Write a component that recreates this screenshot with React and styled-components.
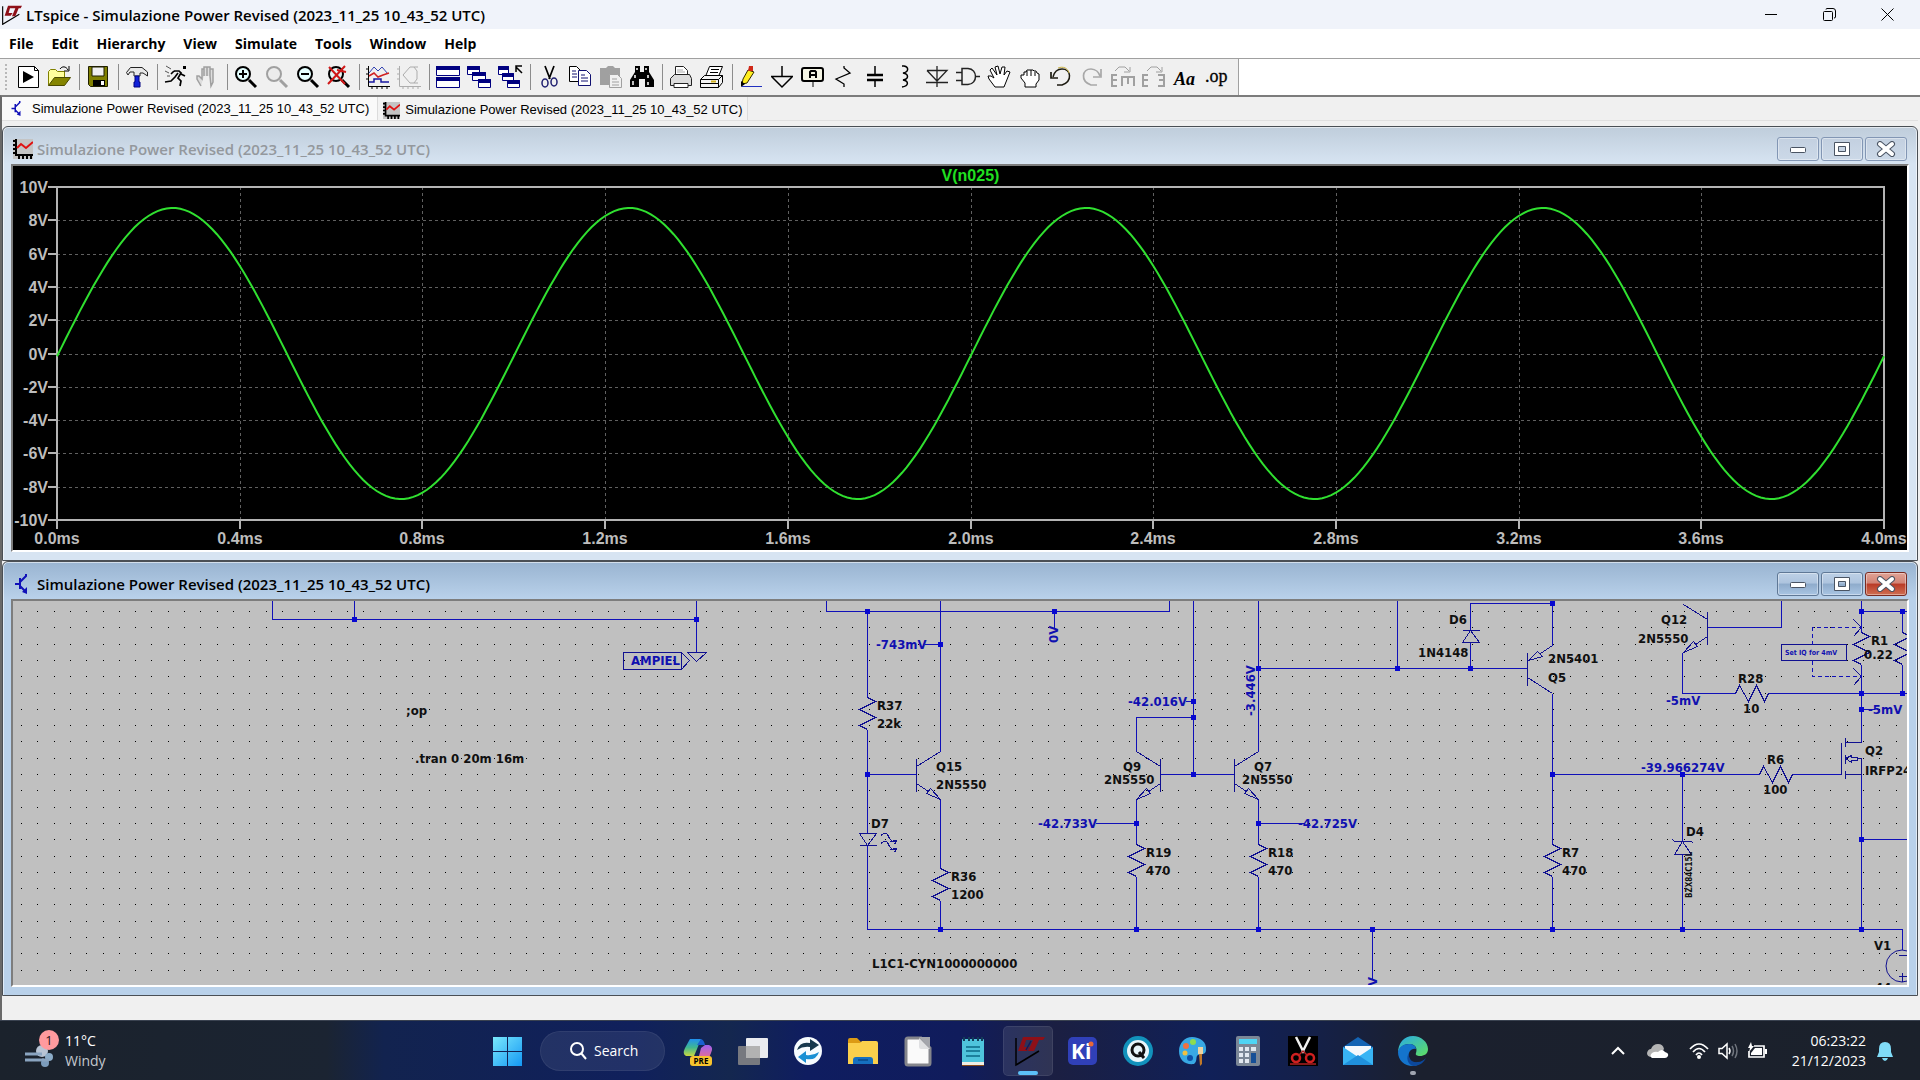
import React, { useLayoutEffect, useRef, useState } from "react";
import styled, { createGlobalStyle } from "styled-components";

const UI = '"Open Sans", "Noto Sans", sans-serif';
const TITLE = "Simulazione Power Revised (2023_11_25 10_43_52 UTC)";

const GlobalStyle = createGlobalStyle`
  * { box-sizing: border-box; }
  body { margin: 0; background: #f0f0f0; font-family: ${UI}; color: #000; }
  button { font: inherit; color: inherit; border: 0; padding: 0; margin: 0; background: none; }
  svg { display: block; }
`;

/* ---------- page shell ---------- */

const Page = styled.div`
  min-height: 100vh;
  display: flex;
  flex-direction: column;
`;

const TitleBar = styled.header`
  height: 29px;
  display: flex;
  align-items: center;
  gap: 4px;
  padding: 0 4px 0 2px;
  background: #f0f3fa;
`;

const AppTitle = styled.h1`
  margin: 0;
  flex: 1;
  font-size: 15px;
  font-weight: 600;
  line-height: 20px;
  white-space: nowrap;
`;

const SystemButtons = styled.div`
  display: flex;
`;

const SystemButton = styled.button`
  width: 58px;
  height: 29px;
  display: flex;
  align-items: center;
  justify-content: center;
`;

const MenuBar = styled.nav`
  height: 30px;
  display: flex;
  align-items: center;
  gap: 18px;
  padding: 0 9px;
  background: #fff;
  border-bottom: 1px solid #a0a0a0;
`;

const MenuItem = styled.button`
  font-size: 14px;
  font-weight: 700;
  line-height: 20px;
`;

const ToolStrip = styled.div`
  background: #fff;
  display: flex;
`;

const ToolBar = styled.div`
  height: 36px;
  display: flex;
  align-items: center;
  padding: 0 6px 0 5px;
  background: #f0f0f0;
  border-right: 1px solid #a0a0a0;
`;

const Grip = styled.span`
  width: 2px;
  height: 26px;
  margin-right: 6px;
  background: repeating-linear-gradient(#b8b8b8 0 2px, #f0f0f0 2px 4px);
`;

const ToolButton = styled.button`
  width: 31px;
  height: 30px;
  display: flex;
  align-items: center;
  padding-left: 3px;
`;

const Separator = styled.span`
  width: 8px;
  height: 26px;
  display: flex;
  justify-content: center;
  &::before { content: ""; width: 1px; background: #8c8c8c; }
`;

const Workspace = styled.main`
  flex: 1;
  border: solid #696969;
  border-width: 2px 0 0 2px;
  border-top-color: #7c7c7c;
  padding-right: 2px;
`;

const TabBar = styled.div`
  height: 24px;
  display: flex;
  align-items: stretch;
  border-bottom: 1px solid #e0e0e0;
`;

const Tab = styled.button`
  display: flex;
  align-items: center;
  gap: ${(p) => (p.$active ? 7 : 5)}px;
  padding: ${(p) => (p.$active ? "0 8px 0 8px" : "3px 4px 0 5px")};
  background: ${(p) => (p.$active ? "#fafafa" : "#f3f3f3")};
  border-right: 1px solid #dcdcdc;
  font-family: "Liberation Sans", Arial, sans-serif;
  font-size: 13px;
  line-height: 16px;
  white-space: nowrap;
`;

const Mdi = styled.div`
  padding-top: 5px;
  background: #f0f0f0;
`;

/* ---------- child windows ---------- */

const Frame = styled.section`
  border: 1px solid #4a4f55;
  border-radius: 6px 6px 0 0;
  padding: 0 8px 8px;
  background: ${(p) =>
    p.$active
      ? "linear-gradient(#99b4d1 0, #b9d1ea 37px, #b9d1ea 100%)"
      : "linear-gradient(#bfcddb 0, #d7e4f2 37px, #d7e4f2 100%)"};
  box-shadow: inset 0 1px 0 #ffffff90, inset -1px 0 0 #ffffff90, inset 1px 0 0 #ffffff90;
`;

const FrameBar = styled.div`
  height: 37px;
  display: flex;
  align-items: center;
  gap: 4px;
  padding: 7px 2px 0 2px;
`;

const FrameTitle = styled.h2`
  flex: 1;
  margin: 0;
  font-size: 15px;
  font-weight: 600;
  line-height: 20px;
  white-space: nowrap;
  color: ${(p) => (p.$active ? "#000" : "#94989d")};
`;

const FrameButtons = styled.div`
  display: flex;
  gap: 2px;
`;

const FrameButton = styled.button`
  width: 42px;
  height: 24px;
  display: flex;
  align-items: center;
  justify-content: center;
  border: 1px solid ${(p) => (p.$tone === "idle" ? "#8296b4" : p.$tone === "close" ? "#7a2a20" : "#5f7896")};
  border-radius: 3px;
  box-shadow: inset 0 0 0 1px #ffffff60;
  background: ${(p) =>
    p.$tone === "idle"
      ? "linear-gradient(#c3d0e0, #ccd9e8)"
      : p.$tone === "close"
        ? "linear-gradient(#e0a396 0, #d28375 46%, #b93a26 50%, #cf6f52 100%)"
        : "linear-gradient(#bdd0e6 0, #adc4de 46%, #8eabcb 50%, #a9c5e3 100%)"};
`;

const Pane = styled.div`
  height: 388px;
  border: 2px solid;
  border-color: #7d7d7d #fff #fff #7d7d7d;
  background: ${(p) => p.$fill};
  overflow: hidden;
`;

/* ---------- small drawings ---------- */

const Logo = ({ size = 22 }) => (
  <svg width={size} height={size} viewBox="0 0 30 30" aria-hidden="true">
    <path d="M1 2V29L26 14" fill="none" stroke="#000" strokeWidth="1.7" />
    <path d="M4 16L9 1H13L10 12H16L13 16ZM13 1H30L28 5H25L20 17H15L20 5H12Z" fill="#8e1018" />
  </svg>
);

const NpnIcon = ({ size = 20 }) => (
  <svg width={size} height={size} viewBox="0 0 20 20" aria-hidden="true">
    <path d="M2 10H7M7 4V15M7 8L13 2V0M7 12L12 17" stroke="#1010b8" strokeWidth="2" fill="none" />
    <path d="M14 20V13L9 18Z" fill="#1010b8" />
  </svg>
);

const WaveIcon = ({ size = 20 }) => (
  <svg width={size} height={size} viewBox="0 0 20 20" aria-hidden="true">
    <path d="M0 0H20V20H0Z" fill="#c4c4c4" />
    <path d="M3 0V16H20M0 2H3M0 6H3M0 10H3M0 14H3M6 16V20M10 16V20M14 16V20M18 16V20" stroke="#000" strokeWidth="2" fill="none" />
    <path d="M4 9L8 5L13 9L20 3" stroke="#e01010" strokeWidth="2" fill="none" />
  </svg>
);

const lens = (color, fill, inner) => (
  <>
    <path d="M15 15L22 22" stroke={color} strokeWidth="3" />
    <circle cx="9" cy="9" r="7" fill={fill} stroke={color} strokeWidth="2" />
    {inner}
  </>
);

const smallWindow = (x, y, w, h) => (
  <>
    <path d={`M${x} ${y}h${w}v${h}h${-w}Z`} fill="#fff" stroke="#000080" />
    <path d={`M${x} ${y}h${w}v3h${-w}Z`} fill="#000080" stroke="#000080" />
  </>
);

const letterE = (x, y) => `M${x + 6} ${y}H${x + 1}V${y + 11}H${x + 6}M${x + 1} ${y + 5}H${x + 6}`;

const ICONS = {
  run: <><path d="M2.5 1.5H18.5L22.5 5.5V22.5H2.5Z" fill="#fff" stroke="#000" /><path d="M18.5 1.5V5.5H22.5" fill="none" stroke="#000" /><path d="M7 6V18L18 12Z" /></>,
  open: <><path d="M1.5 20.5V6.5L3.5 4.5H8.5L10.5 6.5H17.5V12" fill="#ffff9c" stroke="#808000" /><path d="M1.5 20.5L7.5 12.5H23.5L17.5 20.5Z" fill="#848400" stroke="#4a4a00" /><path d="M13 4C15 1 19 1 21 5M22 1V6H17" stroke="#000" fill="none" /></>,
  save: <><path d="M2.5 1.5H21.5V21.5H4.5L2.5 19.5Z" fill="#808000" stroke="#202000" /><path d="M6 2H18V11H6Z" fill="#f0f0f0" stroke="#202000" /><path d="M7 15H19V21H7Z" /><path d="M15 16H18V20H15Z" fill="#fff" /></>,
  hammer: <><path d="M1.5 7.5L5.5 2.5H17L22.5 7V11L18 8H15V11H9V7H5L3 10Z" fill="#e8e8e8" stroke="#222" /><path d="M10 11H14V17H15V22H9V17H10Z" fill="#1020d8" stroke="#000080" /></>,
  sprint: <><path d="M19 1H22V4H19Z" /><path d="M10 6H15L17 8L14 13L17 16L16 21M14 8L11 12L7 16L1 17M17 9L21 11M10 6L7 9" stroke="#000" strokeWidth="1.7" fill="none" /><path d="M2 1L7 4M1 6L5 8M3 11L6 11" stroke="#555" /></>,
  halt: <path d="M6 21L2 14V11H4L7 14V4H9V11M9 11V2H12V11M12 11V2H15V11M15 11V4H18V12V17L16 21Z" fill="#dedede" stroke="#a0a0a0" strokeWidth="1.5" />,
  zoomIn: lens("#000", "#e4ffff", <path d="M9 5V13M5 9H13" stroke="#000" strokeWidth="2" />),
  zoomPan: lens("#a0a0a0", "#ececec", null),
  zoomOut: lens("#000", "#e4ffff", <path d="M5 9H13" stroke="#000" strokeWidth="2" />),
  zoomFit: lens("#000", "#e4f4f4", <path d="M2 2L18 19M18 1L1 19M10 5L19 7" stroke="#d01818" strokeWidth="2" />),
  plot: <><path d="M2.5 1V21.5H24M0 4H3M0 9H3M0 14H3M6 21V24M11 21V24M16 21V24M21 21V24" stroke="#000" fill="none" /><path d="M3 8L8 2L12 6L16 2L22 9" stroke="#3040b0" fill="none" /><path d="M3 11L8 8L12 12L17 10L23 8" stroke="#d02020" strokeWidth="1.5" fill="none" /><path d="M3 17H8V14H15V17H23" stroke="#1818a0" strokeWidth="1.5" fill="none" /></>,
  plotOff: <path d="M2.5 1V21.5H24M0 4H3M0 9H3M0 14H3M6 21V24M11 21V24M16 21V24M21 21V24M21 2H13L6 10L13 18H21M17 2L20 6V14L17 18" stroke="#acacac" fill="none" />,
  tile: <><path d="M.5 1.5H23.5V10.5H.5ZM.5 13.5H23.5V22.5H.5Z" fill="#fff" stroke="#000080" /><path d="M0 1H24V5H0ZM0 12H24V16H0Z" fill="#000080" /></>,
  cascade: <>{smallWindow(0.5, 1.5, 12, 8)}{smallWindow(5.5, 7.5, 13, 8)}{smallWindow(11.5, 14.5, 12, 8)}</>,
  closeAll: <>{smallWindow(0.5, 1.5, 10, 8)}{smallWindow(4.5, 8.5, 11, 7)}{smallWindow(9.5, 15.5, 12, 7)}<path d="M24 8L18 2M18 7V1H24" stroke="#000" fill="none" strokeWidth="1.5" /></>,
  cut: <><path d="M8 1L13 14M17 1L12 14" stroke="#000" strokeWidth="1.7" /><ellipse cx="8" cy="18" rx="3" ry="4" fill="none" stroke="#202070" strokeWidth="1.5" /><ellipse cx="17" cy="17" rx="3" ry="4" fill="none" stroke="#202070" strokeWidth="1.5" /></>,
  copy: <><path d="M1.5 1.5H8.5L12.5 5.5V16.5H1.5Z" fill="#fff" stroke="#000" /><path d="M10.5 5.5H18.5L22.5 9.5V20.5H10.5Z" fill="#fff" stroke="#101070" /><path d="M4 6H8M4 9H9M4 12H9M13 10H17M13 13H20M13 16H20" stroke="#101070" /></>,
  paste: <><path d="M1 3H7L9 1H14L16 3H21V20H1Z" fill="#a0a0a0" /><path d="M10.5 9.5H18.5L22.5 13.5V22.5H10.5Z" fill="#f0f0f0" stroke="#a0a0a0" /><path d="M13 14H18M13 17H20M13 20H20" stroke="#a0a0a0" /></>,
  find: <><path d="M5 1H10V7H14V1H19V7L24 15V22H15V14H9V22H0V15L5 7Z" /><path d="M7 3V5M16 3V5M5 10V13M18 10V13M3 16V20M18 17V20" stroke="#fff" strokeWidth="1.5" /></>,
  preview: <><path d="M6.5 9.5V1.5H14.5L18.5 5.5V9.5" fill="#fff" stroke="#222" /><path d="M1.5 13.5L5.5 9.5H20.5L22.5 13.5V20.5H1.5Z" fill="#dcdcdc" stroke="#222" /><path d="M5 18.5H19V22.5H5Z" fill="#fff" stroke="#222" /><path d="M8 5H14M8 7H16" stroke="#aaa" /></>,
  print: <><path d="M5.5 11.5L9.5 1.5H22.5L18.5 11.5" fill="#fff" stroke="#000" /><path d="M.5 14.5L4.5 10.5H22.5V17.5L18.5 22.5H.5ZM.5 14.5H18.5V22.5M18.5 14.5L22.5 10.5M1 18.5H18" fill="#f4f4f4" stroke="#000" /><path d="M11 4.5H19M10 7.5H18" stroke="#000" /><path d="M11 16.5H16" stroke="#d0b020" strokeWidth="2" /></>,
  wire: <><path d="M9 5L15 7L8 18L3 19L4 14Z" fill="#ffee20" stroke="#302800" /><path d="M10 1H14V6H9Z" fill="#d02818" /><path d="M2 16L6 19L2 22Z" /><path d="M3 21.5H23" stroke="#2030c0" /></>,
  ground: <path d="M12 1V11M1 11.5H23M2 12L12 22L22 12" stroke="#000" strokeWidth="1.5" fill="none" />,
  label: <><rect x="1" y="3" width="21" height="13" rx="2" fill="#f4f4e4" stroke="#000" strokeWidth="2" /><path d="M12 17V22" stroke="#555" strokeWidth="1.5" /><path d="M9 13V7L10 6H14L15 7V13M9 10H15" stroke="#000" strokeWidth="2" fill="none" /></>,
  resistor: <path d="M12 1V3L18 8L4 14L12 19V22" stroke="#000" strokeWidth="1.3" fill="none" />,
  capacitor: <><path d="M12 1V9M12 15V22" stroke="#000" strokeWidth="1.5" /><path d="M4 10H20M4 15H20" stroke="#000" strokeWidth="2.5" /></>,
  inductor: <path d="M8 1H10C15 2 15 7 9 8C15 9 15 14 9 15C15 16 15 21 8 22" stroke="#000" strokeWidth="1.5" fill="none" />,
  diode: <path d="M12 1V22M2 5.5H22L12 16L2 5.5M1 17.5H23" stroke="#222" strokeWidth="1.3" fill="none" />,
  gate: <path d="M6 3.5H12C22 4 22 19 12 19.5H6ZM0 7.5H6M0 15.5H6M19 11.5H24" stroke="#222" strokeWidth="1.5" fill="none" />,
  move: <path d="M8 22L2 14L1 11H4L7 13L3 5L5 3L10 10L8 2L11 1L13 9L15 2H18L17 10L20 6L23 7L19 17L17 22Z" fill="#fff" stroke="#000" />,
  drag: <path d="M7 22V18L3 13V10H6V7H8L9 5H12L13 5H15L16 6H18L19 8L21 9V15L18 19V22Z M9 6V11M13 5V11M17 7V11" fill="#fff" stroke="#000" />,
  undo: <><path d="M8 20H13C24 16 22 4 13 4C8 4 5 8 4 12" stroke="#1c1a10" strokeWidth="1.5" fill="none" /><path d="M9 3C14 1 19 3 20 8" stroke="#c8b040" fill="none" /><path d="M2 7V13H9" stroke="#1c1a10" strokeWidth="1.7" fill="none" /></>,
  redo: <path d="M17 20H11C0 16 2 4 11 4C16 4 19 8 20 11M21 4V12H13" stroke="#a8a8a8" strokeWidth="1.7" fill="none" />,
  rotate: <><path d={`${letterE(0, 10)}M11 21V12H23V21M17 12V19M11 12V19`} stroke="#a0a0a0" strokeWidth="2" fill="none" /><path d="M4 6L8 2H14L18 6M19 2V7H13" stroke="#a0a0a0" fill="none" /></>,
  mirror: <><path d={`${letterE(0, 10)}M16 10H22V21H16M17 15H22`} stroke="#a0a0a0" strokeWidth="2" fill="none" /><path d="M5 6L9 2H15L19 6M20 2V7H14" stroke="#a0a0a0" fill="none" /></>,
  text: <text x="1" y="20" fontFamily="Liberation Serif, serif" fontStyle="italic" fontWeight="700" fontSize="18">Aa</text>,
  directive: <text x="1" y="17" fontFamily="Liberation Serif, serif" stroke="#000" strokeWidth=".3" fontSize="18">.op</text>,
};

const TOOLS = [
  ["run", "open"], ["save"], ["hammer"], ["sprint", "halt"],
  ["zoomIn", "zoomPan", "zoomOut", "zoomFit"], ["plot", "plotOff"],
  ["tile", "cascade", "closeAll"], ["cut", "copy", "paste", "find"], ["preview", "print"],
  ["wire", "ground", "label", "resistor", "capacitor", "inductor", "diode", "gate", "move",
    "drag", "undo", "redo", "rotate", "mirror", "text", "directive"],
];

/* ---------- waveform ---------- */

function useWidth(initial) {
  const ref = useRef(null);
  const [width, setWidth] = useState(initial);
  useLayoutEffect(() => {
    const measure = () => setWidth(ref.current.clientWidth);
    measure();
    const observer = new ResizeObserver(measure);
    observer.observe(ref.current);
    return () => observer.disconnect();
  }, []);
  return [ref, width];
}

const PlotText = styled.text`
  font: 700 16px "Liberation Sans", Arial, sans-serif;
  fill: ${(p) => p.$color || "#bdbdbd"};
  text-anchor: ${(p) => p.$anchor || "middle"};
`;

function Waveform() {
  const [ref, width] = useWidth(1894);
  const left = 44;
  const right = width - 23;
  const top = 21;
  const bottom = 354;
  const xAt = (ms) => left + ((right - left) * ms) / 4;
  const yAt = (v) => top + ((bottom - top) * (10 - v)) / 20;
  const volts = Array.from({ length: 11 }, (_, i) => 10 - 2 * i);
  const times = Array.from({ length: 11 }, (_, i) => i * 0.4);
  const trace = Array.from({ length: 401 }, (_, i) => {
    const ms = i / 100;
    return `${xAt(ms).toFixed(1)},${yAt(8.74 * Math.sin(2 * Math.PI * (ms - 0.003))).toFixed(1)}`;
  }).join(" ");
  const rowY = (v) => Math.round(yAt(v));
  const colX = (t) => Math.round(xAt(t));
  return (
    <Pane $fill="#000">
      <div ref={ref}>
        <svg width="100%" height="384" role="img" aria-label="V(n025)">
          <g shapeRendering="crispEdges" fill="none">
            <path
              d={volts.slice(1, -1).map((v) => `M${left} ${rowY(v) + 0.5}H${right}`).join("") +
                times.slice(1, -1).map((t) => `M${colX(t) + 0.5} ${top}V${bottom}`).join("")}
              stroke="#606060" strokeDasharray="3 3"
            />
            <path d={`M${left} ${top}H${right}V${bottom}H${left}Z`} stroke="#b4b4b4" strokeWidth="2" />
            <path
              d={volts.map((v) => `M${left - 9} ${rowY(v)}H${left}`).join("") +
                times.map((t) => `M${colX(t)} ${bottom}V${bottom + 9}`).join("")}
              stroke="#b4b4b4" strokeWidth="2"
            />
          </g>
          <polyline points={trace} fill="none" stroke="#30e030" strokeWidth="2" />
          <PlotText x={(left + right) / 2} y="15" $color="#20e020">V(n025)</PlotText>
          {volts.map((v) => <PlotText key={v} x="35" y={rowY(v) + 6} $anchor="end">{`${v}V`}</PlotText>)}
          {times.map((t) => <PlotText key={t} x={colX(t)} y="378">{`${t.toFixed(1)}ms`}</PlotText>)}
        </svg>
      </div>
    </Pane>
  );
}

/* ---------- schematic ---------- */

const Label = styled.text`
  font: 700 ${(p) => p.$size || 13}px "DejaVu Sans Condensed", "DejaVu Sans", Verdana, sans-serif;
  fill: ${(p) => (p.$net ? "#1010b0" : "#101010")};
`;

const GRID = Array.from({ length: 23 }, (_, r) =>
  Array.from({ length: 116 }, (_, c) => `M${Math.round(20 + c * 16.3)} ${Math.round(611 + r * 16.3)}h1`).join("")
).join("");

const WIRES =
  "M272 600V619H696M354 600V619M696 600V652" +
  "M826 600V611H1169V600M867 611V697M867 729V833M867 845V929H1902V949M867 774H916" +
  "M940 600V751M924 644H940M940 799V868M940 900V929M1054 611V627" +
  "M1193 600V774M1185 701H1193M1193 717H1136V751M1160 774H1234M1136 799V844M1095 823H1136M1136 876V929" +
  "M1258 600V751M1258 668H1527M1397 600V668M1258 799V844M1258 823H1304M1258 876V929M1372 929V979" +
  "M1470 668V642M1470 630V603H1552V645M1552 693V844M1552 876V929M1552 774H1759M1682 774V841M1682 854V929M1792 774H1841" +
  "M1707 627H1781V600M1682 652V693H1735M1768 693H1908M1861 600V632M1861 611H1908M1861 664V742M1861 709H1874" +
  "M1902 611V632M1902 664V693M1861 774V929M1861 839H1908";

const zigDown = (x, y) => `M${x} ${y}l8 4l-16 8l16 8l-16 8l8 4`;
const zigRight = (x, y) => `M${x} ${y}l4 -8l9 16l8 -16l8 16l4 -8`;
const npn = (x, y, s) =>
  `M${x} ${y - 16}v33M${x} ${y - 8}l${24 * s} -15M${x} ${y + 9}l${12 * s} 8` +
  `M${x + 24 * s} ${y + 25}l${-10 * s} -11l${-4 * s} 5Z`;

const SYMBOLS =
  [[867, 697], [940, 868], [1136, 844], [1258, 844], [1552, 844], [1861, 632], [1902, 632]].map(([x, y]) => zigDown(x, y)).join("") +
  zigRight(1759, 774) + zigRight(1735, 693) +
  npn(916, 774, 1) + npn(1160, 774, -1) + npn(1234, 774, 1) + npn(1707, 627, -1) +
  "M1527 652V685M1552 645L1540 653M1528 660L1537 651L1542 656ZM1527 677L1552 693" +
  "M859 833H876L867 845ZM859 845H876" +
  "M880 836Q885 829 888 836T896 840M896 840L890 841M896 840L894 844M880 844Q885 837 888 844T896 848M896 848L890 849M896 848L894 852" +
  "M1462 630H1479M1462 642H1479L1470 630Z" +
  "M1672 839L1674 841H1691L1693 843M1674 854H1691L1682 841Z" +
  "M1841 742V774M1845 737V746M1845 754V763M1845 770V778M1845 742H1861M1845 774H1861M1845 758L1851 755V757H1857V760H1851V762ZM1857 758H1861V774" +
  "M687 652H706L696 661ZM623 652H681V669H623ZM681 652L689 660L681 669" +
  "M1781 644H1846V660H1781ZM1853 619L1861 627L1853 636M1853 668L1861 676L1853 685" +
  "M1898 955H1907M1898 976H1907M1902 972V981";

const NODES = [
  [354, 619], [696, 619], [867, 611], [1054, 611], [867, 774], [940, 644], [940, 929], [1193, 701], [1193, 717],
  [1193, 774], [1136, 823], [1258, 823], [1258, 668], [1397, 668], [1470, 668], [1136, 929], [1258, 929],
  [1372, 929], [1552, 929], [1682, 929], [1861, 929], [1552, 603], [1552, 774], [1682, 774], [1861, 611],
  [1902, 611], [1861, 693], [1902, 693], [1861, 709], [1861, 839],
];

const PARTS = [
  [406, 715, ";op"], [415, 763, ".tran 0 20m 16m"],
  [877, 710, "R37"], [877, 728, "22k"], [936, 771, "Q15"], [936, 789, "2N5550"], [871, 828, "D7"],
  [951, 881, "R36"], [951, 899, "1200"], [872, 968, "L1C1-CYN1000000000"],
  [1449, 624, "D6"], [1418, 657, "1N4148"], [1123, 771, "Q9"], [1104, 784, "2N5550"],
  [1254, 771, "Q7"], [1242, 784, "2N5550"], [1146, 857, "R19"], [1146, 875, "470"],
  [1268, 857, "R18"], [1268, 875, "470"], [1548, 663, "2N5401"], [1548, 682, "Q5"],
  [1562, 857, "R7"], [1562, 875, "470"], [1767, 764, "R6"], [1763, 794, "100"], [1686, 836, "D4"],
  [1661, 624, "Q12"], [1638, 643, "2N5550"], [1738, 683, "R28"], [1743, 713, "10"],
  [1871, 645, "R1"], [1864, 659, "0.22"], [1865, 755, "Q2"], [1865, 775, "IRFP240"],
  [1874, 950, "V1"], [1875, 992, "44"],
];

const NETS = [
  [631, 665, "AMPIEL"], [876, 649, "-743mV"], [1128, 706, "-42.016V"], [1038, 828, "-42.733V"],
  [1298, 828, "-42.725V"], [1641, 772, "-39.966274V"], [1666, 705, "-5mV"], [1868, 714, "-5mV"],
];

function Schematic() {
  return (
    <Pane $fill="#c0c0c0">
      <svg width="100%" height="384" role="img" aria-label="Schematic">
        <g transform="translate(-12.5 -600.5)" fill="none" shapeRendering="crispEdges">
          <path d={GRID} stroke="#000" />
          <path d={WIRES} stroke="#1010b8" />
          <path d={SYMBOLS} stroke="#101090" />
          <path d="M1812 644V627H1861M1812 660V676H1861" stroke="#1010b8" strokeDasharray="4 3" />
          {NODES.map(([x, y]) => (
            <rect key={`${x}-${y}`} x={x - 2.5} y={y - 2.5} width="5" height="5" fill="#0808d0" />
          ))}
        </g>
        <circle cx="1889" cy="365" r="16" fill="none" stroke="#101090" />
        <g transform="translate(-13 -601)">
          {PARTS.map(([x, y, t]) => <Label key={`${x}-${y}`} x={x} y={y}>{t}</Label>)}
          {NETS.map(([x, y, t]) => <Label key={`${x}-${y}`} x={x} y={y} $net>{t}</Label>)}
          <Label x="1785" y="655" $size={7} $net>Set IQ for 4mV</Label>
          <Label transform="translate(1058 643) rotate(-90)" $net>0V</Label>
          <Label transform="translate(1255 716) rotate(-90)" $net>-3.446V</Label>
          <Label transform="translate(1377 986) rotate(-90)" $net>V</Label>
          <Label transform="translate(1692 898) rotate(-90)" $size={8}>BZX84C15L</Label>
        </g>
      </svg>
    </Pane>
  );
}

/* ---------- window glyphs ---------- */

const MinGlyph = () => (
  <svg width="18" height="8" aria-hidden="true"><rect x="1.5" y="2.5" width="15" height="5" rx="1" fill="#fff" stroke="#4a5463" /></svg>
);
const MaxGlyph = () => (
  <svg width="18" height="16" aria-hidden="true"><path fillRule="evenodd" d="M1.5 1.5H16.5V14.5H1.5ZM5.5 5.5V10.5H12.5V5.5Z" fill="#fff" stroke="#4a5463" /></svg>
);
const CloseGlyph = () => (
  <svg width="20" height="16" viewBox="0 0 20 16" aria-hidden="true">
    <path d="M4 3L16 13M16 3L4 13" stroke="#4a5463" strokeWidth="6" strokeLinecap="round" />
    <path d="M4 3L16 13M16 3L4 13" stroke="#fff" strokeWidth="4" strokeLinecap="round" />
  </svg>
);

function ChildWindow({ active, icon, children }) {
  const tone = active ? "active" : "idle";
  return (
    <Frame $active={active}>
      <FrameBar>
        {icon}
        <FrameTitle $active={active}>{TITLE}</FrameTitle>
        <FrameButtons>
          <FrameButton $tone={tone} aria-label="Minimize"><MinGlyph /></FrameButton>
          <FrameButton $tone={tone} aria-label="Maximize"><MaxGlyph /></FrameButton>
          <FrameButton $tone={active ? "close" : "idle"} aria-label="Close"><CloseGlyph /></FrameButton>
        </FrameButtons>
      </FrameBar>
      {children}
    </Frame>
  );
}

/* ---------- taskbar ---------- */

const Taskbar = styled.footer`
  height: 60px;
  display: grid;
  grid-template-columns: 1fr auto 1fr;
  align-items: center;
  border-top: 1px solid #3a4250;
  color: #fff;
  font-size: 14px;
  line-height: 20px;
  background: linear-gradient(90deg, #1b222c 0, #1b2432 17%, #12234f 20%, #10205c 33%, #14274f 38%,
    #0f1d60 42%, #101c5c 50%, #1b1f42 55%, #102058 63%, #14204a 68%, #1b202e 74%, #1b212b 100%);
`;

const Weather = styled.button`
  display: flex;
  align-items: center;
  gap: 5px;
  padding-left: 24px;
  text-align: left;
`;

const WeatherText = styled.span`
  display: flex;
  flex-direction: column;
  span { color: #c4c8ce; }
`;

const Dock = styled.div`
  display: flex;
  align-items: center;
  gap: 8px;
`;

const Apps = styled.div`
  display: flex;
  gap: 5px;
`;

const AppButton = styled.button`
  width: 50px;
  height: 50px;
  display: flex;
  align-items: center;
  justify-content: center;
  position: relative;
  border-radius: 5px;
  background: ${(p) => (p.$active ? "#ffffff18" : "none")};
  box-shadow: ${(p) => (p.$active ? "inset 0 0 0 1px #ffffff14" : "none")};
`;

const Indicator = styled.span`
  position: absolute;
  bottom: 1px;
  left: 50%;
  width: ${(p) => (p.$active ? 20 : 6)}px;
  height: 4px;
  margin-left: ${(p) => (p.$active ? -10 : -3)}px;
  border-radius: 2px;
  background: ${(p) => (p.$active ? "#5cc0f8" : "#a0a4b0")};
`;

const Search = styled.button`
  width: 125px;
  height: 40px;
  display: flex;
  align-items: center;
  gap: 6px;
  padding-left: 28px;
  border-radius: 20px;
  background: #ffffff14;
  box-shadow: inset 0 0 0 1px #ffffff10;
`;

const Tray = styled.div`
  display: flex;
  align-items: center;
  justify-content: flex-end;
  gap: 10px;
  padding-right: 26px;
`;

const TrayButton = styled.button`
  display: flex;
  align-items: center;
  gap: 9px;
  margin-right: ${(p) => p.$after || 0}px;
`;

const Clock = styled.button`
  display: flex;
  flex-direction: column;
  align-items: flex-end;
  margin-left: 14px;
`;

const DOCK_APPS = [
  ["Copilot", <>
    <path d="M7 3H18L14 13L11 20H3Q-1 18 2 12Z" fill="url(#cpA)" /><path d="M18 3Q21 4 22 9H14Z" fill="#1a5fd0" />
    <path d="M22 9H26Q31 11 28 17L25 24H15L18 12Z" fill="url(#cpB)" />
    <rect x="7" y="20" width="22" height="10" rx="3" fill="#f7c32e" />
    <text x="18" y="28" textAnchor="middle" fontSize="8" fontWeight="700" fontFamily="Open Sans, sans-serif">PRE</text>
  </>],
  ["Task view", <><rect x="8" y="2" width="22" height="20" rx="1" fill="#e9ebef" /><rect x="0" y="10" width="22" height="19" rx="1" fill="#77797f" /><path d="M8 10H22V22H8Z" fill="#b2b2b2" /></>],
  ["Sync", <><circle cx="15" cy="15" r="14" fill="#f6fbfe" /><path d="M4 14Q7 5 17 7V3L26 9L17 15V11Q10 10 4 14Z" fill="#16384e" /><path d="M26 16Q23 25 13 23V27L5 21L13 15V19Q20 20 26 16Z" fill="#1a90d4" /></>],
  ["File Explorer", <><path d="M0 4Q0 2 2 2H9L13 6H29V16H0Z" fill="#dc9b14" /><path d="M0 7H12L14 5H28Q30 5 30 7V28H0Z" fill="#fbd04c" /><path d="M5 28V24Q5 21 8 21H22Q25 21 25 24V28Z" fill="#1670c0" /><path d="M10 24H20" stroke="#0a4a8a" strokeWidth="1.5" /></>],
  ["LibreOffice", <><path d="M5 2H18L27 12V27Q27 29 25 29H5Q3 29 3 27V4Q3 2 5 2Z" fill="#fafafa" stroke="#85868c" strokeWidth="3" /><path d="M16 1H27V13Z" fill="#a4a6ac" /><path d="M16 2L27 13H18Q16 13 16 11Z" fill="#dfe0e2" /></>],
  ["Notepad", <><rect x="4" y="3" width="22" height="26" rx="1" fill="#4fc4dc" /><path d="M4 26H26V29H4Z" fill="#f0ede4" /><path d="M4 29H26V30H4Z" fill="#8a4a18" /><path d="M6 1V5M11 1V5M15 1V5M20 1V5M24 1V5" stroke="#123c58" strokeWidth="2" /><path d="M8 11H22M8 15H22M8 20H22" stroke="#0d6a86" strokeWidth="1.7" /></>],
  ["LTspice", <><path d="M3 2V29L26 15" fill="none" stroke="#000" strokeWidth="1.5" /><path d="M5 15L10 1H14L11 11H16L14 15ZM14 1H32L30 4H26L21 15H15L20 4H13Z" fill="#8e1018" /><path d="M18 5L13 14" stroke="#101c5c" strokeWidth="1.5" /></>],
  ["KiCad", <><rect x="0" y="1" width="29" height="28" rx="5" fill="#3040b8" /><text x="3" y="23" fontSize="21" fontWeight="700" fill="#fff" fontFamily="Open Sans, sans-serif">Ki</text><circle cx="23" cy="8" r="2.5" fill="#e86838" /></>],
  ["QSpice", <><circle cx="15" cy="15" r="15" fill="#1292bc" /><circle cx="15" cy="15" r="11" fill="#e8f6fa" /><circle cx="15" cy="14" r="6" fill="none" stroke="#111" strokeWidth="3" /><path d="M16 16L21 22" stroke="#111" strokeWidth="3" /></>],
  ["Paint", <><path d="M14 1C22 1 29 6 28 14C28 19 23 18 20 19C17 21 20 25 16 28C7 29 1 24 1 15C1 7 7 1 14 1Z" fill="#38a8e4" /><circle cx="15" cy="6" r="3" fill="#8ddc50" /><circle cx="8" cy="10" r="3" fill="#f07040" /><circle cx="7" cy="17" r="2.5" fill="#f0c040" /><circle cx="12" cy="22" r="3" fill="#0d50a8" /><path d="M20 11H25V18H20Z" fill="#ecd4a4" /><path d="M21 18H24V28L22 30Z" fill="#c07828" /></>],
  ["Calculator", <><rect x="3" y="0" width="24" height="30" rx="2" fill="#7b8796" /><rect x="6" y="3" width="18" height="5" fill="#4fd4f4" /><path d="M6 11H10V15H6ZM12 11H16V15H12ZM18 11H23V15H18ZM6 17H10V21H6ZM12 17H16V21H12ZM6 23H10V27H6ZM12 23H16V27H12Z" fill="#e2e8f0" /><path d="M18 17H23V27H18Z" fill="#164f96" /></>],
  ["Snip", <><rect width="30" height="30" fill="#000" /><path d="M8 1L16 17M22 1L14 17" stroke="#f0f0f0" strokeWidth="2.5" /><circle cx="8" cy="22" r="4" fill="none" stroke="#d02020" strokeWidth="2.5" /><circle cx="22" cy="22" r="4" fill="none" stroke="#d02020" strokeWidth="2.5" /><path d="M11 19L15 15L19 19M2 28H28" stroke="#b02020" strokeWidth="1.5" fill="none" /></>],
  ["Mail", <><path d="M0 11L15 1L30 11V18H0Z" fill="#1464b4" /><path d="M2 10H28V20H2Z" fill="#f4f8fc" /><path d="M0 11L15 21L30 11V29H0Z" fill="#38b4f4" /><path d="M0 29L15 19L30 29Z" fill="#2090dc" /></>],
  ["Edge", <><path d="M15 0C23 0 30 6 30 13C30 18 26 20 22 20C19 20 17 19 18 17C20 11 16 8 11 8C5 8 1 12 0 17C0 7 6 0 15 0Z" fill="url(#edA)" /><path d="M0 16C1 11 5 8 11 8C15 8 18 10 18 13C13 12 10 16 11 21C12 26 17 28 23 26C20 29 18 30 15 30C6 30 0 24 0 16Z" fill="#1474cc" /><path d="M11 17C10 23 14 27 20 26C23 26 26 24 28 22C25 28 20 30 15 30C9 28 8 21 11 17Z" fill="#0c489c" /></>],
];

function TaskbarRow() {
  return (
    <Taskbar>
      <Weather aria-label="Weather">
        <svg width="36" height="44" aria-hidden="true">
          <circle cx="18" cy="22" r="6" fill="#b8c4d4" />
          <path d="M1 25H18M1 31H20" stroke="#8aa4c0" strokeWidth="3" fill="none" />
          <circle cx="25" cy="28" r="4" fill="#8cacc8" />
          <circle cx="21" cy="34" r="4" fill="#7c9cbc" />
          <path d="M18 31H25" stroke="#8aa4c0" strokeWidth="3" />
          <circle cx="25" cy="11" r="10" fill="#ff9a9e" />
          <text x="25" y="16" textAnchor="middle" fontSize="13" fontFamily="Open Sans, sans-serif" fill="#2a1418">1</text>
        </svg>
        <WeatherText>11°C<span>Windy</span></WeatherText>
      </Weather>
      <Dock>
        <AppButton aria-label="Start">
          <svg width="30" height="30" aria-hidden="true">
            <defs>
              <linearGradient id="win" x1="0" y1="0" x2="1" y2="1"><stop offset="0" stopColor="#7ae8fc" /><stop offset="1" stopColor="#1498f4" /></linearGradient>
              <linearGradient id="cpA" x1="0" y1="0" x2="0" y2="1"><stop offset="0" stopColor="#2090f0" /><stop offset=".5" stopColor="#40b890" /><stop offset="1" stopColor="#c8d840" /></linearGradient>
              <linearGradient id="cpB" x1="0" y1="0" x2="0" y2="1"><stop offset="0" stopColor="#a060f0" /><stop offset="1" stopColor="#f07080" /></linearGradient>
              <linearGradient id="edA" x1="0" y1="0" x2="1" y2="1"><stop offset="0" stopColor="#28a8e8" /><stop offset="1" stopColor="#60e060" /></linearGradient>
            </defs>
            <path d="M1 1H15V15H1ZM16 1H30V15H16ZM1 16H15V30H1ZM16 16H30V30H16Z" fill="url(#win)" />
          </svg>
        </AppButton>
        <Search>
          <svg width="20" height="20" aria-hidden="true"><circle cx="9" cy="8" r="6" fill="none" stroke="#fff" strokeWidth="2" /><path d="M13 12L18 18" stroke="#fff" strokeWidth="2" /></svg>
          Search
        </Search>
        <Apps>
          {DOCK_APPS.map(([name, art]) => (
            <AppButton key={name} aria-label={name} $active={name === "LTspice"}>
              <svg width="30" height="30" overflow="visible" aria-hidden="true">{art}</svg>
              {(name === "LTspice" || name === "Edge") && <Indicator $active={name === "LTspice"} />}
            </AppButton>
          ))}
        </Apps>
      </Dock>
      <Tray>
        <TrayButton aria-label="Hidden icons" $after={11}>
          <svg width="16" height="12" aria-hidden="true"><path d="M2 9L8 3L14 9" stroke="#fff" strokeWidth="2" fill="none" /></svg>
        </TrayButton>
        <TrayButton aria-label="OneDrive" $after={10}>
          <svg width="22" height="16" aria-hidden="true"><path d="M5 14Q0 14 0 10Q1 6 4 6Q6 1 11 1Q16 1 17 6L11 14Z" fill="#b4b4b4" /><path d="M5 15Q2 13 5 10Q8 8 11 9Q15 5 18 9Q22 10 21 13Q20 15 18 15Z" fill="#fff" /></svg>
        </TrayButton>
        <TrayButton aria-label="Network, volume and battery">
          <svg width="20" height="18" aria-hidden="true"><path d="M1 7Q10 -3 19 7M4 10Q10 3 16 10M7 13Q10 9 13 13" stroke="#fff" strokeWidth="1.7" fill="none" /><circle cx="10" cy="15" r="2" fill="#fff" /></svg>
          <svg width="20" height="18" aria-hidden="true"><path d="M1 6.5H4L9 2V16L4 11.5H1Z" fill="none" stroke="#fff" strokeWidth="1.5" /><path d="M11 6Q13 9 11 12" stroke="#fff" strokeWidth="1.5" fill="none" /><path d="M14 4Q17 9 14 14M17 2Q21 9 17 16" stroke="#70757e" strokeWidth="1.5" fill="none" /></svg>
          <svg width="21" height="18" aria-hidden="true"><path d="M7 4H17V15H2V9" stroke="#fff" strokeWidth="1.7" fill="none" /><path d="M8 6H15V13H4V11Z" fill="#fff" /><path d="M18 7H20V12H18Z" fill="#fff" /><path d="M4 0L1 6H3L2 10L7 4H5Z" fill="#fff" /></svg>
        </TrayButton>
        <Clock><span>06:23:22</span><span>21/12/2023</span></Clock>
        <TrayButton aria-label="Notifications">
          <svg width="18" height="20" aria-hidden="true"><path d="M9 1Q15 1 15 8V11L17 16H1L3 11V8Q3 1 9 1ZM6 17H12Q11 20 9 20Q7 20 6 17Z" fill="#80dcf8" /></svg>
        </TrayButton>
      </Tray>
    </Taskbar>
  );
}

/* ---------- app ---------- */

export default function App() {
  return (
    <Page>
      <GlobalStyle />
      <TitleBar>
        <Logo size={20} />
        <AppTitle>LTspice - {TITLE}</AppTitle>
        <SystemButtons>
          <SystemButton aria-label="Minimize"><svg width="12" height="12"><path d="M0 5.5H12" stroke="#000" /></svg></SystemButton>
          <SystemButton aria-label="Restore"><svg width="13" height="13"><rect x=".5" y="3.5" width="9" height="9" rx="1" fill="none" stroke="#000" /><path d="M3 1.5Q3 .5 4 .5H10Q12.5 .5 12.5 3V9Q12.5 10 11 10" fill="none" stroke="#000" /></svg></SystemButton>
          <SystemButton aria-label="Close"><svg width="13" height="13"><path d="M.5 .5L12.5 12.5M12.5 .5L.5 12.5" stroke="#000" /></svg></SystemButton>
        </SystemButtons>
      </TitleBar>
      <MenuBar>
        {["File", "Edit", "Hierarchy", "View", "Simulate", "Tools", "Window", "Help"].map((m) => (
          <MenuItem key={m}>{m}</MenuItem>
        ))}
      </MenuBar>
      <ToolStrip>
        <ToolBar>
          <Grip />
          {TOOLS.map((group, i) => (
            <React.Fragment key={group[0]}>
              {i > 0 && <Separator />}
              {group.map((name) => (
                <ToolButton key={name} aria-label={name}>
                  <svg width="24" height="24" overflow="visible" aria-hidden="true">{ICONS[name]}</svg>
                </ToolButton>
              ))}
            </React.Fragment>
          ))}
        </ToolBar>
      </ToolStrip>
      <Workspace>
        <TabBar>
          <Tab $active><NpnIcon size={15} />{TITLE}</Tab>
          <Tab><WaveIcon size={17} />{TITLE}</Tab>
        </TabBar>
        <Mdi>
          <ChildWindow icon={<WaveIcon />}><Waveform /></ChildWindow>
          <ChildWindow active icon={<NpnIcon />}><Schematic /></ChildWindow>
        </Mdi>
      </Workspace>
      <TaskbarRow />
    </Page>
  );
}
